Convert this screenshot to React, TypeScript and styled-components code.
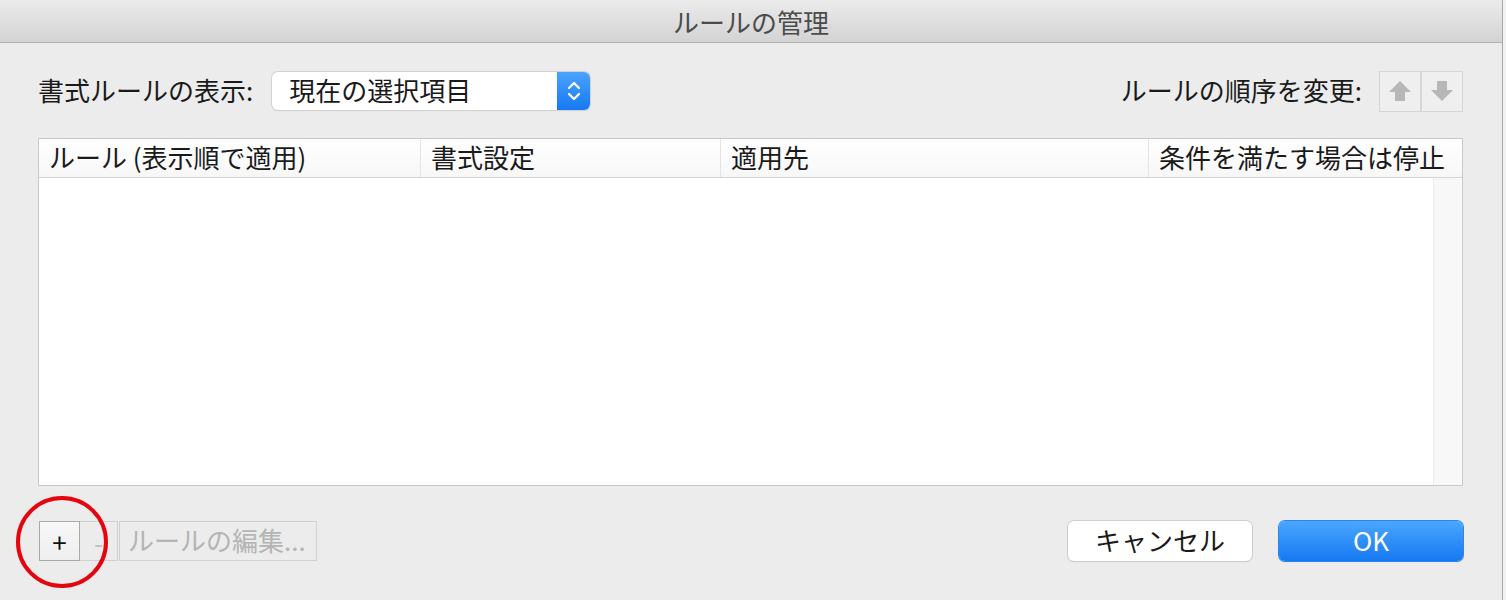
import React from 'react';
import styled, { createGlobalStyle } from 'styled-components';

const GlobalStyle = createGlobalStyle`
  html, body {
    margin: 0;
    padding: 0;
    overflow: hidden;
    background: #f2f2f2;
  }
  body {
    font-family: "Noto Sans CJK JP", "Noto Sans", sans-serif;
    color: #1a1a1a;
  }
`;

const COLUMNS = [
  { label: 'ルール (表示順で適用)', width: '381px' },
  { label: '書式設定', width: '300px' },
  { label: '適用先', width: '428px' },
  { label: '条件を満たす場合は停止', width: '1fr' },
];

const Window = styled.div`
  width: 1502px;
  height: 600px;
  background: #ececec;
  border-right: 1px solid #a9a9a9;
  display: flex;
  flex-direction: column;
`;

const TitleBar = styled.div`
  height: 42px;
  background: linear-gradient(#ebebeb, #d3d3d3);
  border-bottom: 1px solid #b3b3b3;
  display: flex;
  align-items: center;
  justify-content: center;
  font-size: 26px;
  color: #4b4b4b;
`;

const Content = styled.div`
  flex: 1;
  padding: 27px 39px 0 38px;
  display: flex;
  flex-direction: column;
`;

const TopRow = styled.div`
  height: 42px;
  display: flex;
  align-items: center;
  justify-content: space-between;
`;

const Group = styled.div`
  display: flex;
  align-items: center;
`;

const Label = styled.span`
  font-size: 26px;
  margin-right: 16px;
  margin-top: -3px;
  white-space: nowrap;
`;

const Select = styled.div`
  width: 318px;
  height: 38px;
  margin-left: 3px;
  display: flex;
  background: #fff;
  border-radius: 6px;
  box-shadow: 0 0 0 1px #d2d2d2, 0 1px 1px rgba(0, 0, 0, 0.15);
  overflow: hidden;
`;

const SelectValue = styled.div`
  flex: 1;
  display: flex;
  align-items: center;
  padding: 0 0 3px 17px;
  font-size: 26px;
`;

const SelectArrow = styled.div`
  width: 33px;
  background: linear-gradient(#4aa3fd, #1679f2);
  display: flex;
  align-items: center;
  justify-content: center;
`;

const OrderButtons = styled.div`
  display: flex;
  margin-left: 1px;
`;

const OrderButton = styled.div`
  width: 42px;
  height: 41px;
  box-sizing: border-box;
  border: 1px solid #d6d6d6;
  background: #efefef;
  display: flex;
  align-items: center;
  justify-content: center;
  & + & {
    border-left: none;
    box-shadow: inset 1px 0 0 #d6d6d6;
  }
`;

const Table = styled.div`
  margin-top: 26px;
  height: 348px;
  box-sizing: border-box;
  border: 1px solid #c9c9c9;
  background: #fff;
  display: flex;
  flex-direction: column;
`;

const HeaderRow = styled.div<{ columns: string }>`
  height: 38px;
  display: grid;
  grid-template-columns: ${props => props.columns};
  background: linear-gradient(#ffffff, #f7f7f7);
  border-bottom: 1px solid #d4d4d4;
`;

const HeaderCell = styled.div`
  display: flex;
  align-items: center;
  padding: 0 0 3px 10px;
  font-size: 26px;
  white-space: nowrap;
  overflow: hidden;
  & + & {
    border-left: 1px solid #e4e4e4;
  }
`;

const TableBody = styled.div`
  flex: 1;
  display: flex;
  justify-content: flex-end;
`;

const ScrollTrack = styled.div`
  width: 28px;
  background: #f8f8f8;
  border-left: 1px solid #ececec;
`;

const BottomRow = styled.div`
  margin-top: 35px;
  height: 40px;
  display: flex;
  justify-content: space-between;
  align-items: center;
`;

const EditGroup = styled.div`
  position: relative;
  display: flex;
  height: 40px;
  padding-left: 1px;
`;

const SquareButton = styled.div<{ disabled?: boolean }>`
  width: ${props => (props.disabled ? '38px' : '41px')};
  box-sizing: border-box;
  border: 1px solid ${props => (props.disabled ? '#d0d0d0' : '#a9a9a9')};
  background: ${props => (props.disabled ? '#ececec' : 'linear-gradient(#f8f8f8, #eeeeee)')};
  color: ${props => (props.disabled ? '#bdbdbd' : '#111')};
  display: flex;
  align-items: center;
  justify-content: center;
  font-size: 26px;
  & + & {
    border-left: none;
  }
`;

const EditButton = styled.div`
  margin-left: 1px;
  width: 198px;
  box-sizing: border-box;
  border: 1px solid #d0d0d0;
  color: #b4b4b4;
  font-size: 26px;
  display: flex;
  align-items: center;
  padding: 0 0 3px 8px;
  white-space: nowrap;
  overflow: hidden;
`;

const Highlight = styled.div`
  position: absolute;
  left: -22px;
  top: -25px;
  width: 92px;
  height: 92px;
  box-sizing: border-box;
  border: 4px solid #e4050f;
  border-radius: 50%;
  pointer-events: none;
`;

const DialogButtons = styled.div`
  display: flex;
  gap: 27px;
`;

const DialogButton = styled.div<{ primary?: boolean }>`
  width: 184px;
  height: 40px;
  box-sizing: border-box;
  padding-bottom: 3px;
  border-radius: 6px;
  display: flex;
  align-items: center;
  justify-content: center;
  font-size: 26px;
  color: ${props => (props.primary ? '#fff' : '#1a1a1a')};
  background: ${props => (props.primary ? 'linear-gradient(#4aa6fd, #1679f2)' : '#fff')};
  box-shadow: ${props =>
    props.primary
      ? '0 0 0 1px #2a86f0, 0 1px 1px rgba(0,0,0,0.15)'
      : '0 0 0 1px #cfcfcf, 0 1px 1px rgba(0,0,0,0.2)'};
`;

function Chevrons() {
  return (
    <svg width="14" height="24" viewBox="0 0 14 24" fill="none" stroke="#fff" strokeWidth="2.2" strokeLinecap="round" strokeLinejoin="round">
      <path d="M2 9 L7 4 L12 9" />
      <path d="M2 15 L7 20 L12 15" />
    </svg>
  );
}

function BlockArrow({ down }: { down?: boolean }) {
  return (
    <svg width="24" height="24" viewBox="0 0 24 24" style={down ? { transform: 'rotate(180deg)' } : undefined}>
      <path d="M12 2 L23 13 L17 13 L17 22 L7 22 L7 13 L1 13 Z" fill="#b7b7b7" />
    </svg>
  );
}

function App() {
  const gridColumns = COLUMNS.map(c => c.width).join(' ');

  return (
    <>
      <GlobalStyle />
      <Window>
        <TitleBar>ルールの管理</TitleBar>
        <Content>
          <TopRow>
            <Group>
              <Label>書式ルールの表示:</Label>
              <Select>
                <SelectValue>現在の選択項目</SelectValue>
                <SelectArrow>
                  <Chevrons />
                </SelectArrow>
              </Select>
            </Group>
            <Group>
              <Label>ルールの順序を変更:</Label>
              <OrderButtons>
                <OrderButton>
                  <BlockArrow />
                </OrderButton>
                <OrderButton>
                  <BlockArrow down />
                </OrderButton>
              </OrderButtons>
            </Group>
          </TopRow>
          <Table>
            <HeaderRow columns={gridColumns}>
              {COLUMNS.map(col => (
                <HeaderCell key={col.label}>{col.label}</HeaderCell>
              ))}
            </HeaderRow>
            <TableBody>
              <ScrollTrack />
            </TableBody>
          </Table>
          <BottomRow>
            <EditGroup>
              <SquareButton>+</SquareButton>
              <SquareButton disabled>-</SquareButton>
              <EditButton>ルールの編集...</EditButton>
              <Highlight />
            </EditGroup>
            <DialogButtons>
              <DialogButton>キャンセル</DialogButton>
              <DialogButton primary>OK</DialogButton>
            </DialogButtons>
          </BottomRow>
        </Content>
      </Window>
    </>
  );
}

export default App;
